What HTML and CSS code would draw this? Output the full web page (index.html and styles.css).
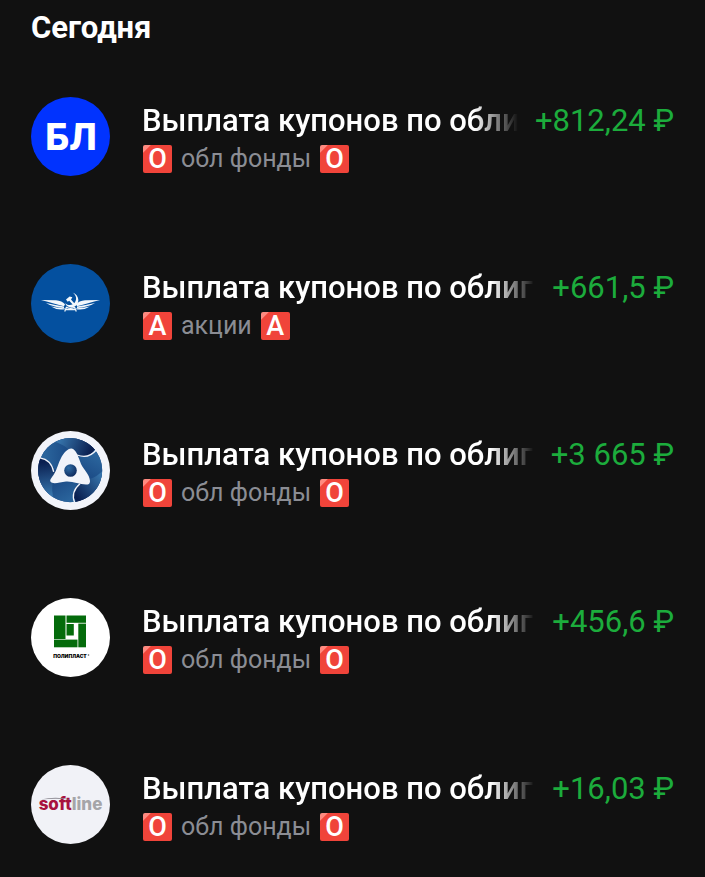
FILE: index.html
```html
<!DOCTYPE html>
<html lang="ru">
<head>
  <meta charset="UTF-8" />
  <meta name="viewport" content="width=device-width, initial-scale=1.0"/>
  <title>Операции</title>
  <link rel="stylesheet" href="styles.css">
</head>
<body>
  <main class="feed">
    <h2 class="day">Сегодня</h2>

    <ul class="operations">
      <li class="operation">
        <svg class="logo" viewBox="0 0 79 79">
          <circle cx="39.5" cy="39.5" r="39.5" fill="#0133fe"/>
          <text class="logo-bl" x="40" y="53" text-anchor="middle">БЛ</text>
        </svg>
        <div class="info">
          <div class="top">
            <span class="title">Выплата купонов по облиг</span>
            <span class="amount">+812,24 ₽</span>
          </div>
          <div class="account"><span class="badge">O</span>обл фонды<span class="badge">O</span></div>
        </div>
      </li>

      <li class="operation">
        <svg class="logo" viewBox="0 0 79 79">
          <circle cx="39.5" cy="39.5" r="39.5" fill="#04509f"/>
          <!-- wings -->
          <g id="wing" fill="#f4f8fc">
            <path d="M10 36 L25 36.3 Q31 36.8 34 40.3 L33 42.2 Q24 39.8 10 36Z"/>
            <path d="M15 39 Q25 41 33 42.6 L33 44 Q22 43.2 15 39Z"/>
            <path d="M20 42.6 Q28 44.4 33.5 44.3 L34 45.2 Q26 46.6 20 42.6Z"/>
          </g>
          <use href="#wing" transform="translate(79 0) scale(-1 1)"/>
          <!-- hammer and sickle -->
          <path d="M41.5 28.5 C49 31 49.5 41 42 43.2 C38 44 35.2 42 34.2 39.2 C37.5 42 41.8 41.4 43.8 38.6 C46 35.4 45.5 31 41.5 28.5Z" fill="#f4f8fc"/>
          <path d="M35 35.4 L38.6 32.4 L41.4 33.2 L40 35.4 L44.8 41 L43.3 42.3 L38.2 36.8 L36.7 37.7Z" fill="#f4f8fc"/>
          <path d="M33.7 47.5 L35.4 43.4 Q39.5 45.3 43.6 43.4 L45.3 47.5 M35 45.6 H44" fill="none" stroke="#f4f8fc" stroke-width="1.2"/>
        </svg>
        <div class="info">
          <div class="top">
            <span class="title">Выплата купонов по облиг</span>
            <span class="amount">+661,5 ₽</span>
          </div>
          <div class="account"><span class="badge">A</span>акции<span class="badge">A</span></div>
        </div>
      </li>

      <li class="operation">
        <svg class="logo" viewBox="0 0 79 79">
          <defs>
            <linearGradient id="blade" gradientUnits="userSpaceOnUse" x1="14" y1="22" x2="62" y2="22">
              <stop offset="0" stop-color="#2a649c"/>
              <stop offset="0.5" stop-color="#1b4a85"/>
              <stop offset="1" stop-color="#0c2558"/>
            </linearGradient>
            <linearGradient id="fold" gradientUnits="userSpaceOnUse" x1="28" y1="12" x2="58" y2="24">
              <stop offset="0" stop-color="#3572a9"/>
              <stop offset="1" stop-color="#0a1f50"/>
            </linearGradient>
            <radialGradient id="core" cx="0.35" cy="0.3" r="0.8">
              <stop offset="0" stop-color="#2f6ca5"/>
              <stop offset="1" stop-color="#0a2457"/>
            </radialGradient>
          </defs>
          <circle cx="39.5" cy="39.5" r="39.5" fill="#f2f4fa"/>
          <circle cx="39.2" cy="39.2" r="32" fill="#1b4a85"/>
          <g id="third">
            <path d="M9.2 28.5 A32 32 0 0 1 64.6 19.5 C60 25.5 53 26 47 24 L39.2 39.2 L23 38 C21 32 16 28 9.2 28.5Z" fill="url(#blade)"/>
            <path d="M24 11 A32 32 0 0 1 64.6 19.5 C60 25.5 53 26 47 24 L41 25 C39 17 31 13 24 11Z" fill="url(#fold)"/>
          </g>
          <use href="#third" transform="rotate(120 39.2 39.2)"/>
          <use href="#third" transform="rotate(240 39.2 39.2)"/>
          <g fill="none" stroke="#f2f4fa" stroke-width="1.3">
            <path id="seam" d="M65.2 19 C60 25.5 53 26.5 46 24"/>
            <use href="#seam" transform="rotate(120 39.2 39.2)"/>
            <use href="#seam" transform="rotate(240 39.2 39.2)"/>
          </g>
          <path d="M40.5 17.5 C45 18 47.5 26 50 33 C53 39 58.5 43 59 50 C59 53 57.5 53.5 55 53.5 C48 53.5 42 50 35 50.5 C29 51 24 53.5 20.5 51.5 C17.5 49.5 20.5 47 22.5 44 C26 39 27 32 30.5 26 C33 22 36.5 17.3 40.5 17.5Z" fill="#f2f4fa"/>
          <circle cx="39.5" cy="39.5" r="6.3" fill="url(#core)"/>
        </svg>
        <div class="info">
          <div class="top">
            <span class="title">Выплата купонов по облиг</span>
            <span class="amount">+3 665 ₽</span>
          </div>
          <div class="account"><span class="badge">O</span>обл фонды<span class="badge">O</span></div>
        </div>
      </li>

      <li class="operation">
        <svg class="logo" viewBox="0 0 79 79">
          <circle cx="39.5" cy="39.5" r="39.5" fill="#fff"/>
          <g fill="#046b0b">
            <path d="M23 17.5 h11.5 v23.5 h-11.5z"/>
            <path d="M23 41.6 h23.5 v7.7 h-23.5z"/>
            <path d="M35.5 17.5 h19.5 v7.3 h-19.5z"/>
            <path d="M47.3 25.6 h7.7 v23.7 h-7.7z"/>
            <path d="M35.5 26 h7.3 v11.5 h-7.3z"/>
          </g>
          <text class="logo-poly" x="39" y="60" text-anchor="middle">ПОЛИПЛАСТ</text>
          <circle cx="57.5" cy="57" r="0.8" fill="#555"/>
        </svg>
        <div class="info">
          <div class="top">
            <span class="title">Выплата купонов по облиг</span>
            <span class="amount">+456,6 ₽</span>
          </div>
          <div class="account"><span class="badge">O</span>обл фонды<span class="badge">O</span></div>
        </div>
      </li>

      <li class="operation">
        <svg class="logo" viewBox="0 0 79 79">
          <circle cx="39.5" cy="39.5" r="39.5" fill="#f1f2f7"/>
          <text class="logo-soft" x="39.5" y="45" text-anchor="middle"><tspan fill="#a8123f">soft</tspan><tspan fill="#a5a5a8">line</tspan></text>
          <path d="M10 34.5 Q24 31 40 34.5 Q24 33 10 34.5Z" fill="#8d8b93"/>
        </svg>
        <div class="info">
          <div class="top">
            <span class="title">Выплата купонов по облиг</span>
            <span class="amount">+16,03 ₽</span>
          </div>
          <div class="account"><span class="badge">O</span>обл фонды<span class="badge">O</span></div>
        </div>
      </li>
    </ul>
  </main>
</body>
</html>
```

FILE: styles.css
```css
body {
  margin: 0;
  background-color: #111111;
  color: #ffffff;
  font-family: Roboto, "Liberation Sans", sans-serif;
}
.feed {
  padding: 8px 31px 32px;
}
.day {
  margin: 0;
  font-size: 31px;
  line-height: 40px;
  font-weight: 700;
}
.operations {
  list-style: none;
  margin: 49px 0 0;
  padding: 0;
  display: grid;
  grid-template-columns: minmax(0, 1fr);
  gap: 88px;
}
.operation {
  display: flex;
  gap: 32px;
}
.logo {
  width: 79px;
  height: 79px;
  flex: none;
}
.info {
  flex: 1;
  min-width: 0;
  padding-top: 4px;
}
.top {
  display: flex;
  gap: 17px;
  font-size: 31px;
  line-height: 40px;
  white-space: nowrap;
}
.title {
  flex: 1;
  min-width: 0;
  overflow: hidden;
  font-weight: 500;
  -webkit-mask-image: linear-gradient(to left, transparent, #000 44px);
  mask-image: linear-gradient(to left, transparent, #000 44px);
}
.amount {
  color: #1cac3c;
}
.account {
  display: flex;
  align-items: center;
  gap: 9px;
  padding-left: 1px;
  font-size: 25px;
  line-height: 35px;
  color: #8b8d94;
}
.badge {
  width: 29px;
  height: 28px;
  border-radius: 2px;
  background: linear-gradient(135deg, #ff8a80 5px, #f0443a 6px);
  color: #ffffff;
  font-size: 27px;
  font-weight: 500;
  line-height: 28px;
  text-align: center;
}
.logo-bl {
  font-family: Inter, sans-serif;
  font-size: 37px;
  font-weight: 800;
  fill: #ffffff;
}
.logo-poly {
  font-family: Inter, sans-serif;
  font-size: 5px;
  font-weight: 900;
  fill: #000000;
}
.logo-soft {
  font-family: Inter, sans-serif;
  font-size: 17px;
  font-weight: 800;
}
```
